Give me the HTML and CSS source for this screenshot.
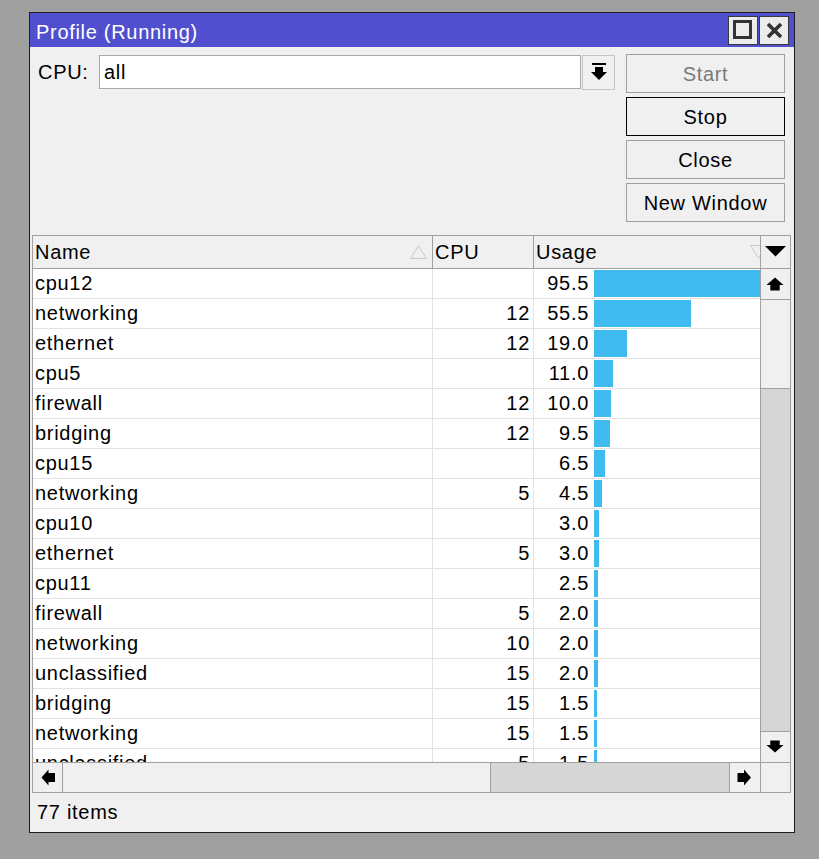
FILE: index.html
```html
<!DOCTYPE html>
<html lang="en">
<head>
<meta charset="utf-8">
<title>Profile (Running)</title>
<link rel="stylesheet" href="styles.css">
</head>
<body>
<div class="window">
  <div class="titlebar">
    <span class="title">Profile (Running)</span>
    <div class="tb-btns">
      <div class="tb-btn">
        <svg width="28" height="27" viewBox="0 0 28 27"><rect x="5.5" y="4.5" width="16" height="16" fill="none" stroke="#333" stroke-width="3"/></svg>
      </div>
      <div class="tb-btn">
        <svg width="28" height="27" viewBox="0 0 28 27"><path d="M8 7L21 20M21 7L8 20" stroke="#333" stroke-width="3.6" fill="none"/></svg>
      </div>
    </div>
  </div>

  <div class="top">
    <div class="cpu-row">
      <span class="cpu-label">CPU:</span>
      <div class="select">all</div>
      <div class="dd-btn">
        <svg width="31" height="33" viewBox="0 0 31 33"><rect x="9" y="7" width="14" height="2" fill="#000"/><path d="M12 11h8v5h4l-8 8-8-8h4z" fill="#000"/></svg>
      </div>
    </div>
    <div class="actions">
      <div class="btn disabled">Start</div>
      <div class="btn default">Stop</div>
      <div class="btn">Close</div>
      <div class="btn">New Window</div>
    </div>
  </div>

  <div class="table">
    <div class="thead">
      <div class="h-cell h-name"><span>Name</span>
        <svg class="sort sort-up" width="17" height="14" viewBox="0 0 17 14"><path d="M8.5 0.8L16.3 13.5H0.7Z" fill="none" stroke="#c8c8c8" stroke-width="1"/></svg>
      </div>
      <div class="h-cell h-cpu"><span>CPU</span></div>
      <div class="h-cell h-usage"><span>Usage</span>
        <svg class="sort sort-down" width="17" height="14" viewBox="0 0 17 14"><path d="M0.7 0.5H16.3L8.5 13.2Z" fill="none" stroke="#c8c8c8" stroke-width="1"/></svg>
      </div>
    </div>
    <div class="h-menu">
      <svg width="29" height="32" viewBox="0 0 29 32"><path d="M4 10H25L14.5 20.5Z" fill="#000"/></svg>
    </div>

    <div class="tbody">
      <div class="row"><div class="c-name">cpu12</div><div class="c-cpu"></div><div class="c-usage"><span class="u-val">95.5</span><span class="u-bar" style="width:166px"></span></div></div>
      <div class="row"><div class="c-name">networking</div><div class="c-cpu">12</div><div class="c-usage"><span class="u-val">55.5</span><span class="u-bar" style="width:97px"></span></div></div>
      <div class="row"><div class="c-name">ethernet</div><div class="c-cpu">12</div><div class="c-usage"><span class="u-val">19.0</span><span class="u-bar" style="width:33px"></span></div></div>
      <div class="row"><div class="c-name">cpu5</div><div class="c-cpu"></div><div class="c-usage"><span class="u-val">11.0</span><span class="u-bar" style="width:19px"></span></div></div>
      <div class="row"><div class="c-name">firewall</div><div class="c-cpu">12</div><div class="c-usage"><span class="u-val">10.0</span><span class="u-bar" style="width:17px"></span></div></div>
      <div class="row"><div class="c-name">bridging</div><div class="c-cpu">12</div><div class="c-usage"><span class="u-val">9.5</span><span class="u-bar" style="width:16px"></span></div></div>
      <div class="row"><div class="c-name">cpu15</div><div class="c-cpu"></div><div class="c-usage"><span class="u-val">6.5</span><span class="u-bar" style="width:11px"></span></div></div>
      <div class="row"><div class="c-name">networking</div><div class="c-cpu">5</div><div class="c-usage"><span class="u-val">4.5</span><span class="u-bar" style="width:8px"></span></div></div>
      <div class="row"><div class="c-name">cpu10</div><div class="c-cpu"></div><div class="c-usage"><span class="u-val">3.0</span><span class="u-bar" style="width:5px"></span></div></div>
      <div class="row"><div class="c-name">ethernet</div><div class="c-cpu">5</div><div class="c-usage"><span class="u-val">3.0</span><span class="u-bar" style="width:5px"></span></div></div>
      <div class="row"><div class="c-name">cpu11</div><div class="c-cpu"></div><div class="c-usage"><span class="u-val">2.5</span><span class="u-bar" style="width:4px"></span></div></div>
      <div class="row"><div class="c-name">firewall</div><div class="c-cpu">5</div><div class="c-usage"><span class="u-val">2.0</span><span class="u-bar" style="width:3.5px"></span></div></div>
      <div class="row"><div class="c-name">networking</div><div class="c-cpu">10</div><div class="c-usage"><span class="u-val">2.0</span><span class="u-bar" style="width:3.5px"></span></div></div>
      <div class="row"><div class="c-name">unclassified</div><div class="c-cpu">15</div><div class="c-usage"><span class="u-val">2.0</span><span class="u-bar" style="width:3.5px"></span></div></div>
      <div class="row"><div class="c-name">bridging</div><div class="c-cpu">15</div><div class="c-usage"><span class="u-val">1.5</span><span class="u-bar" style="width:2.6px"></span></div></div>
      <div class="row"><div class="c-name">networking</div><div class="c-cpu">15</div><div class="c-usage"><span class="u-val">1.5</span><span class="u-bar" style="width:2.6px"></span></div></div>
      <div class="row"><div class="c-name">unclassified</div><div class="c-cpu">5</div><div class="c-usage"><span class="u-val">1.5</span><span class="u-bar" style="width:2.6px"></span></div></div>
    </div>

    <div class="vscroll">
      <div class="sb-btn sb-up">
        <svg width="28" height="30" viewBox="0 0 28 30"><path d="M14 8.5l8.5 7.5h-3.8v5.5h-9.4v-5.5H5.5z" fill="#000"/></svg>
      </div>
      <div class="v-thumb"></div>
      <div class="sb-track"></div>
      <div class="sb-btn sb-down">
        <svg width="28" height="30" viewBox="0 0 28 30"><path d="M9.3 8.5h9.4v4.5h3.8l-8.5 7.5-8.5-7.5h3.8z" fill="#000"/></svg>
      </div>
    </div>

    <div class="hscroll">
      <div class="hb-btn hb-left">
        <svg width="29" height="29" viewBox="0 0 29 29"><path d="M8.5 14.5L15.5 6.5V10H22V19H15.5V22.5Z" fill="#000"/></svg>
      </div>
      <div class="h-thumb"></div>
      <div class="sb-track"></div>
      <div class="hb-btn hb-right">
        <svg width="29" height="29" viewBox="0 0 29 29"><path d="M21 14.5L14 6.5V10H7.5V19H14V22.5Z" fill="#000"/></svg>
      </div>
    </div>
    <div class="corner"></div>
  </div>

  <div class="status">77 items</div>
</div>
</body>
</html>
```

FILE: styles.css
```css
* {
  box-sizing: border-box;
}

html, body {
  margin: 0;
  padding: 0;
}

body {
  width: 819px;
  height: 859px;
  overflow: hidden;
  background: #a0a0a0;
  font-family: "Liberation Sans", Arial, sans-serif;
  font-size: 20px;
  letter-spacing: 0.7px;
  color: #000;
}

svg {
  display: block;
}

.window {
  margin: 12px 0 0 29px;
  width: 766px;
  height: 821px;
  border: 1px solid #1e1e1e;
  background: #f0f0f0;
  display: flex;
  flex-direction: column;
}

/* title bar */
.titlebar {
  flex: none;
  height: 34px;
  background: #5050cf;
  display: flex;
  align-items: center;
  padding: 0 5px 0 6px;
}

.title {
  flex: 1;
  color: #fff;
  line-height: 34px;
  padding-top: 3px;
}

.tb-btns {
  display: flex;
  gap: 1px;
}

.tb-btn {
  width: 30px;
  height: 29px;
  border: 1px solid #3a3a3a;
  background: #ececec;
}

/* top area */
.top {
  flex: none;
  height: 188px;
  display: flex;
  align-items: flex-start;
  padding: 7px 9px 0 8px;
}

.cpu-row {
  flex: 1;
  display: flex;
  margin-top: 1px;
  height: 35px;
}

.cpu-label {
  width: 61px;
  line-height: 34px;
}

.select {
  flex: 1;
  height: 34px;
  border: 1px solid #a8a8a8;
  background: #fff;
  padding-left: 4px;
  line-height: 32px;
}

.dd-btn {
  width: 33px;
  height: 35px;
  margin-left: 1px;
  border: 1px solid #c4c4c4;
  background: #f0f0f0;
}

.actions {
  width: 159px;
  margin-left: 11px;
  display: flex;
  flex-direction: column;
  gap: 4px;
}

.btn {
  height: 39px;
  border: 1px solid #a0a0a0;
  background: #f0f0f0;
  display: flex;
  align-items: center;
  justify-content: center;
  padding-top: 1px;
}

.btn.disabled {
  color: #7a7a7a;
}

.btn.default {
  border-color: #000;
}

/* table */
.table {
  flex: none;
  margin-left: 2px;
  width: 759px;
  height: 558px;
  border: 1px solid #a0a0a0;
  background: #fff;
  display: grid;
  grid-template-columns: 727px 30px;
  grid-template-rows: 33px 493px 30px;
}

.thead {
  display: flex;
  background: #f0f0f0;
  border-bottom: 1px solid #a0a0a0;
}

.h-cell {
  display: flex;
  align-items: center;
  line-height: 32px;
  overflow: hidden;
}

.h-name {
  width: 400px;
  padding-left: 2px;
  border-right: 1px solid #a0a0a0;
}

.h-cpu {
  width: 101px;
  padding-left: 2px;
  border-right: 1px solid #a0a0a0;
}

.h-usage {
  flex: 1;
  padding-left: 2px;
}

.sort {
  margin-left: auto;
  flex: none;
}

.sort-up {
  margin-right: 5px;
}

.sort-down {
  margin-right: -7px;
}

.h-menu {
  background: #f0f0f0;
  border-left: 1px solid #a0a0a0;
  border-bottom: 1px solid #a0a0a0;
}

.tbody {
  overflow: hidden;
}

.row {
  display: flex;
  height: 30px;
  border-bottom: 1px solid #e2e2e2;
  line-height: 29px;
}

.c-name {
  width: 400px;
  padding-left: 2px;
  border-right: 1px solid #e2e2e2;
  white-space: nowrap;
}

.c-cpu {
  width: 101px;
  padding-right: 3px;
  text-align: right;
  border-right: 1px solid #e2e2e2;
}

.c-usage {
  flex: 1;
  display: flex;
  align-items: center;
  overflow: hidden;
}

.u-val {
  flex: none;
  width: 56px;
  padding-right: 1px;
  text-align: right;
}

.u-bar {
  flex: none;
  height: 27px;
  margin-left: 4px;
  background: #40bbef;
}

/* scrollbars */
.vscroll {
  display: flex;
  flex-direction: column;
  border-left: 1px solid #a0a0a0;
  background: #d6d6d6;
}

.sb-btn {
  flex: none;
  height: 31px;
  background: #f0f0f0;
}

.sb-up {
  border-bottom: 1px solid #a0a0a0;
}

.sb-down {
  border-top: 1px solid #a0a0a0;
}

.v-thumb {
  flex: none;
  height: 89px;
  background: #f0f0f0;
  border-bottom: 1px solid #a0a0a0;
}

.sb-track {
  flex: 1;
  background: #d6d6d6;
}

.hscroll {
  display: flex;
  border-top: 1px solid #a0a0a0;
  background: #d6d6d6;
}

.hb-btn {
  flex: none;
  width: 30px;
  background: #f0f0f0;
}

.hb-left {
  border-right: 1px solid #a0a0a0;
}

.hb-right {
  width: 31px;
  border-left: 1px solid #a0a0a0;
}

.h-thumb {
  flex: none;
  width: 428px;
  background: #f0f0f0;
  border-right: 1px solid #a0a0a0;
}

.corner {
  background: #f0f0f0;
  border-top: 1px solid #a0a0a0;
  border-left: 1px solid #a0a0a0;
}

/* status bar */
.status {
  flex: 1;
  display: flex;
  align-items: center;
  padding-left: 7px;
}
```
